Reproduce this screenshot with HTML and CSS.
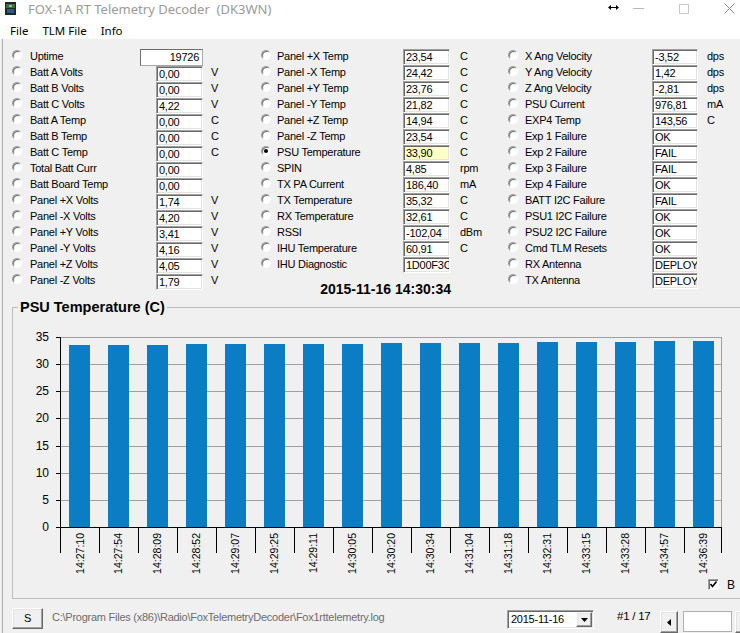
FILE: index.html
```html
<!DOCTYPE html>
<html lang="en">
<head>
  <meta charset="UTF-8">
  <title>FOX-1A RT Telemetry Decoder</title>
  <link rel="stylesheet" href="styles.css">
</head>
<body>
  <div class="titlebar">
    <svg class="app-icon" width="11" height="13" viewBox="0 0 11 13">
      <rect x="0" y="0" width="11" height="13" fill="#1e2a22"/>
      <rect x="1" y="2" width="9" height="4" fill="#3d6b46"/>
      <rect x="2" y="7" width="7" height="4" fill="#2b5a8c"/>
      <rect x="4" y="3" width="3" height="2" fill="#9ac27a"/>
    </svg>
    <span class="title">FOX-1A RT Telemetry Decoder&nbsp; (DK3WN)</span>
    <div class="caption">
      <svg class="cursor" width="11" height="5" viewBox="0 0 11 5">
        <path d="M0 2.5 L3 0 V5 Z M11 2.5 L8 0 V5 Z" fill="#000"/>
        <rect x="2" y="2" width="7" height="1" fill="#000"/>
      </svg>
      <svg class="cap-min" width="11" height="1" viewBox="0 0 11 1"><rect width="11" height="1" fill="#b8b8b8"/></svg>
      <svg class="cap-max" width="10" height="10" viewBox="0 0 10 10"><rect x="0.5" y="0.5" width="9" height="9" fill="none" stroke="#c8c8c8"/></svg>
      <svg class="cap-close" width="11" height="11" viewBox="0 0 11 11"><path d="M0.5 0.5 L10.5 10.5 M10.5 0.5 L0.5 10.5" stroke="#8a8a8a" stroke-width="1"/></svg>
    </div>
  </div>
  <div class="menubar">
    <span>File</span><span>TLM File</span><span>Info</span>
  </div>

  <div class="content">
    <div class="fields">
      <div class="col col-left">
        <div class="row"><span class="radio"></span><span class="label">Uptime</span><span class="uptime">19726</span></div>
        <div class="row"><span class="radio"></span><span class="label">Batt A Volts</span><span class="box">0,00</span><span class="unit">V</span></div>
        <div class="row"><span class="radio"></span><span class="label">Batt B Volts</span><span class="box">0,00</span><span class="unit">V</span></div>
        <div class="row"><span class="radio"></span><span class="label">Batt C Volts</span><span class="box">4,22</span><span class="unit">V</span></div>
        <div class="row"><span class="radio"></span><span class="label">Batt A Temp</span><span class="box">0,00</span><span class="unit">C</span></div>
        <div class="row"><span class="radio"></span><span class="label">Batt B Temp</span><span class="box">0,00</span><span class="unit">C</span></div>
        <div class="row"><span class="radio"></span><span class="label">Batt C Temp</span><span class="box">0,00</span><span class="unit">C</span></div>
        <div class="row"><span class="radio"></span><span class="label">Total Batt Curr</span><span class="box">0,00</span></div>
        <div class="row"><span class="radio"></span><span class="label">Batt Board Temp</span><span class="box">0,00</span></div>
        <div class="row"><span class="radio"></span><span class="label">Panel +X Volts</span><span class="box">1,74</span><span class="unit">V</span></div>
        <div class="row"><span class="radio"></span><span class="label">Panel -X Volts</span><span class="box">4,20</span><span class="unit">V</span></div>
        <div class="row"><span class="radio"></span><span class="label">Panel +Y Volts</span><span class="box">3,41</span><span class="unit">V</span></div>
        <div class="row"><span class="radio"></span><span class="label">Panel -Y Volts</span><span class="box">4,16</span><span class="unit">V</span></div>
        <div class="row"><span class="radio"></span><span class="label">Panel +Z Volts</span><span class="box">4,05</span><span class="unit">V</span></div>
        <div class="row"><span class="radio"></span><span class="label">Panel -Z Volts</span><span class="box">1,79</span><span class="unit">V</span></div>
      </div>

      <div class="col col-mid">
        <div class="row"><span class="radio"></span><span class="label">Panel +X Temp</span><span class="box">23,54</span><span class="unit">C</span></div>
        <div class="row"><span class="radio"></span><span class="label">Panel -X Temp</span><span class="box">24,42</span><span class="unit">C</span></div>
        <div class="row"><span class="radio"></span><span class="label">Panel +Y Temp</span><span class="box">23,76</span><span class="unit">C</span></div>
        <div class="row"><span class="radio"></span><span class="label">Panel -Y Temp</span><span class="box">21,82</span><span class="unit">C</span></div>
        <div class="row"><span class="radio"></span><span class="label">Panel +Z Temp</span><span class="box">14,94</span><span class="unit">C</span></div>
        <div class="row"><span class="radio"></span><span class="label">Panel -Z Temp</span><span class="box">23,54</span><span class="unit">C</span></div>
        <div class="row"><span class="radio on"></span><span class="label">PSU Temperature</span><span class="box selected">33,90</span><span class="unit">C</span></div>
        <div class="row"><span class="radio"></span><span class="label">SPIN</span><span class="box">4,85</span><span class="unit">rpm</span></div>
        <div class="row"><span class="radio"></span><span class="label">TX PA Current</span><span class="box">186,40</span><span class="unit">mA</span></div>
        <div class="row"><span class="radio"></span><span class="label">TX Temperature</span><span class="box">35,32</span><span class="unit">C</span></div>
        <div class="row"><span class="radio"></span><span class="label">RX Temperature</span><span class="box">32,61</span><span class="unit">C</span></div>
        <div class="row"><span class="radio"></span><span class="label">RSSI</span><span class="box">-102,04</span><span class="unit">dBm</span></div>
        <div class="row"><span class="radio"></span><span class="label">IHU Temperature</span><span class="box">60,91</span><span class="unit">C</span></div>
        <div class="row"><span class="radio"></span><span class="label">IHU Diagnostic</span><span class="box">1D00F3C</span></div>
        <div class="timestamp">2015-11-16 14:30:34</div>
      </div>

      <div class="col col-right">
        <div class="row"><span class="radio"></span><span class="label">X Ang Velocity</span><span class="box">-3,52</span><span class="unit">dps</span></div>
        <div class="row"><span class="radio"></span><span class="label">Y Ang Velocity</span><span class="box">1,42</span><span class="unit">dps</span></div>
        <div class="row"><span class="radio"></span><span class="label">Z Ang Velocity</span><span class="box">-2,81</span><span class="unit">dps</span></div>
        <div class="row"><span class="radio"></span><span class="label">PSU Current</span><span class="box">976,81</span><span class="unit">mA</span></div>
        <div class="row"><span class="radio"></span><span class="label">EXP4 Temp</span><span class="box">143,56</span><span class="unit">C</span></div>
        <div class="row"><span class="radio"></span><span class="label">Exp 1 Failure</span><span class="box">OK</span></div>
        <div class="row"><span class="radio"></span><span class="label">Exp 2 Failure</span><span class="box">FAIL</span></div>
        <div class="row"><span class="radio"></span><span class="label">Exp 3 Failure</span><span class="box">FAIL</span></div>
        <div class="row"><span class="radio"></span><span class="label">Exp 4 Failure</span><span class="box">OK</span></div>
        <div class="row"><span class="radio"></span><span class="label">BATT I2C Failure</span><span class="box">FAIL</span></div>
        <div class="row"><span class="radio"></span><span class="label">PSU1 I2C Failure</span><span class="box">OK</span></div>
        <div class="row"><span class="radio"></span><span class="label">PSU2 I2C Failure</span><span class="box">OK</span></div>
        <div class="row"><span class="radio"></span><span class="label">Cmd TLM Resets</span><span class="box">OK</span></div>
        <div class="row"><span class="radio"></span><span class="label">RX Antenna</span><span class="box">DEPLOY</span></div>
        <div class="row"><span class="radio"></span><span class="label">TX Antenna</span><span class="box">DEPLOY</span></div>
      </div>
    </div>

    <fieldset class="group">
      <legend>PSU Temperature (C)</legend>
      <svg class="chart" width="727" height="260" viewBox="13 316 727 260">
        <!-- grid -->
        <g stroke="#a0a0a0" stroke-width="1">
          <line x1="60" y1="337.5" x2="722" y2="337.5"/>
          <line x1="60" y1="364.5" x2="722" y2="364.5"/>
          <line x1="60" y1="391.5" x2="722" y2="391.5"/>
          <line x1="60" y1="418.5" x2="722" y2="418.5"/>
          <line x1="60" y1="446.5" x2="722" y2="446.5"/>
          <line x1="60" y1="473.5" x2="722" y2="473.5"/>
          <line x1="60" y1="500.5" x2="722" y2="500.5"/>
          <line x1="721.5" y1="337" x2="721.5" y2="527"/>
        </g>
        <!-- bars -->
        <g fill="#0a7dc5">
          <rect x="69" y="345" width="21" height="182"/>
          <rect x="108" y="345" width="21" height="182"/>
          <rect x="147" y="345" width="21" height="182"/>
          <rect x="186" y="344" width="21" height="183"/>
          <rect x="225" y="344" width="21" height="183"/>
          <rect x="264" y="344" width="21" height="183"/>
          <rect x="303" y="344" width="21" height="183"/>
          <rect x="342" y="344" width="21" height="183"/>
          <rect x="381" y="343" width="21" height="184"/>
          <rect x="420" y="343" width="21" height="184"/>
          <rect x="459" y="343" width="21" height="184"/>
          <rect x="498" y="343" width="21" height="184"/>
          <rect x="537" y="342" width="21" height="185"/>
          <rect x="576" y="342" width="21" height="185"/>
          <rect x="615" y="342" width="21" height="185"/>
          <rect x="654" y="341" width="21" height="186"/>
          <rect x="693" y="341" width="21" height="186"/>
        </g>
        <!-- axes and ticks -->
        <g stroke="#000" stroke-width="1">
          <line x1="60.5" y1="337" x2="60.5" y2="553"/>
          <line x1="56" y1="527.5" x2="722" y2="527.5"/>
          <line x1="56" y1="337.5" x2="60" y2="337.5"/>
          <line x1="56" y1="364.5" x2="60" y2="364.5"/>
          <line x1="56" y1="391.5" x2="60" y2="391.5"/>
          <line x1="56" y1="418.5" x2="60" y2="418.5"/>
          <line x1="56" y1="446.5" x2="60" y2="446.5"/>
          <line x1="56" y1="473.5" x2="60" y2="473.5"/>
          <line x1="56" y1="500.5" x2="60" y2="500.5"/>
          <line x1="99.5" y1="527" x2="99.5" y2="553"/>
          <line x1="138.5" y1="527" x2="138.5" y2="553"/>
          <line x1="177.5" y1="527" x2="177.5" y2="553"/>
          <line x1="216.5" y1="527" x2="216.5" y2="553"/>
          <line x1="255.5" y1="527" x2="255.5" y2="553"/>
          <line x1="294.5" y1="527" x2="294.5" y2="553"/>
          <line x1="333.5" y1="527" x2="333.5" y2="553"/>
          <line x1="372.5" y1="527" x2="372.5" y2="553"/>
          <line x1="411.5" y1="527" x2="411.5" y2="553"/>
          <line x1="450.5" y1="527" x2="450.5" y2="553"/>
          <line x1="489.5" y1="527" x2="489.5" y2="553"/>
          <line x1="528.5" y1="527" x2="528.5" y2="553"/>
          <line x1="567.5" y1="527" x2="567.5" y2="553"/>
          <line x1="606.5" y1="527" x2="606.5" y2="553"/>
          <line x1="645.5" y1="527" x2="645.5" y2="553"/>
          <line x1="684.5" y1="527" x2="684.5" y2="553"/>
          <line x1="721.5" y1="527" x2="721.5" y2="553"/>
        </g>
        <!-- y labels -->
        <g class="ylabels" text-anchor="end">
          <text x="49" y="341">35</text>
          <text x="49" y="368">30</text>
          <text x="49" y="395">25</text>
          <text x="49" y="422">20</text>
          <text x="49" y="450">15</text>
          <text x="49" y="477">10</text>
          <text x="49" y="504">5</text>
          <text x="49" y="531">0</text>
        </g>
        <!-- x labels -->
        <g class="xlabels" text-anchor="end">
          <text transform="translate(83.5 533) rotate(-90)">14:27:10</text>
          <text transform="translate(122.4 533) rotate(-90)">14:27:54</text>
          <text transform="translate(161.4 533) rotate(-90)">14:28:09</text>
          <text transform="translate(200.3 533) rotate(-90)">14:28:52</text>
          <text transform="translate(239.3 533) rotate(-90)">14:29:07</text>
          <text transform="translate(278.2 533) rotate(-90)">14:29:25</text>
          <text transform="translate(317.1 533) rotate(-90)">14:29:11</text>
          <text transform="translate(356.1 533) rotate(-90)">14:30:05</text>
          <text transform="translate(395 533) rotate(-90)">14:30:20</text>
          <text transform="translate(434 533) rotate(-90)">14:30:34</text>
          <text transform="translate(472.9 533) rotate(-90)">14:31:04</text>
          <text transform="translate(511.9 533) rotate(-90)">14:31:18</text>
          <text transform="translate(550.8 533) rotate(-90)">14:32:31</text>
          <text transform="translate(589.7 533) rotate(-90)">14:33:15</text>
          <text transform="translate(628.7 533) rotate(-90)">14:33:28</text>
          <text transform="translate(667.6 533) rotate(-90)">14:34:57</text>
          <text transform="translate(706.5 533) rotate(-90)">14:36:39</text>
        </g>
      </svg>
      <div class="check-row">
        <span class="checkbox">
          <svg width="9" height="9" viewBox="0 0 9 9"><path d="M1.5 4 L3.5 6.5 L7.5 1.5" fill="none" stroke="#000" stroke-width="1.6"/></svg>
        </span>
        <span class="check-label">B</span>
      </div>
    </fieldset>

    <div class="statusbar">
      <div class="button raised">S</div>
      <div class="path">C:\Program Files (x86)\Radio\FoxTelemetryDecoder\Fox1rttelemetry.log</div>
      <div class="combo">
        <span class="combo-text">2015-11-16</span>
        <span class="combo-btn raised">
          <svg width="7" height="4" viewBox="0 0 7 4"><path d="M0 0 H7 L3.5 4 Z" fill="#000"/></svg>
        </span>
      </div>
      <div class="count">#1 / 17</div>
      <div class="scroll">
        <span class="scroll-btn raised">
          <svg width="4" height="7" viewBox="0 0 4 7"><path d="M4 0 V7 L0 3.5 Z" fill="#000"/></svg>
        </span>
        <span class="scroll-box"></span>
        <span class="scroll-btn raised">
          <svg width="4" height="7" viewBox="0 0 4 7"><path d="M0 0 V7 L4 3.5 Z" fill="#000"/></svg>
        </span>
      </div>
    </div>
  </div>
</body>
</html>
```

FILE: styles.css
```css
body {
  margin: 0;
  width: 740px;
  height: 633px;
  overflow: hidden;
  background: #f0f0f0;
  font-family: "Liberation Sans", Arial, sans-serif;
  font-size: 11px;
  color: #000;
}

/* window chrome */
.titlebar {
  height: 17px;
  background: #fff;
  display: flex;
  align-items: center;
  padding-left: 5px;
}

.app-icon {
  display: block;
}

.title {
  font-family: "Noto Sans", sans-serif;
  font-size: 13px;
  color: #9a9a9a;
  margin-left: 12px;
  white-space: pre;
}

.caption {
  margin-left: auto;
  padding-right: 5px;
  display: flex;
  align-items: center;
}

.caption svg {
  display: block;
}

.cursor {
  align-self: flex-start;
  margin-top: 2px;
}

.cap-min {
  margin-left: 14px;
}

.cap-max {
  margin-left: 35px;
}

.cap-close {
  margin-left: 35px;
}

.menubar {
  height: 22px;
  box-sizing: border-box;
  padding: 5px 0 0 3px;
  background: #fff;
  display: flex;
}

.menubar span {
  font-family: "Noto Sans", sans-serif;
  font-size: 11.5px;
  line-height: 17px;
  padding: 0 7px;
}

.content {
  margin-left: 2px;
  border-left: 1px solid #adadad;
  height: 594px;
}

/* telemetry fields */
.fields {
  display: grid;
  grid-template-columns: 249px 247px 232px;
  padding: 9px 0 0 9px;
}

.col {
  display: flex;
  flex-direction: column;
}

.row {
  display: grid;
  height: 16px;
  grid-template-columns: 18px 126px 47px auto;
  align-items: start;
  letter-spacing: -0.25px;
}

.col-mid .row {
  grid-template-columns: 16px 126px 47px auto;
}

.col-right .row {
  grid-template-columns: 17px 127px 46px auto;
}

.radio {
  width: 10px;
  height: 10px;
  box-sizing: border-box;
  margin-top: 2px;
  border-radius: 50%;
  border: 1px solid;
  border-color: #a0a0a0 #fff #fff #a0a0a0;
  box-shadow: inset 1px 1px 0 #707070;
  background: #fff;
}

.radio.on::after {
  content: "";
  display: block;
  width: 4px;
  height: 4px;
  margin: 2px;
  border-radius: 50%;
  background: #000;
}

.label {
  line-height: 16px;
  white-space: nowrap;
}

.box {
  height: 16px;
  box-sizing: border-box;
  margin-top: 1px;
  padding-left: 2px;
  border: 1px solid;
  border-color: #a0a0a0 #fff #fff #a0a0a0;
  box-shadow: inset 1px 1px 0 #696969, inset -1px -1px 0 #e3e3e3;
  background: #fff;
  line-height: 15px;
  white-space: nowrap;
  overflow: hidden;
}

.col-left .box {
  margin-top: 2px;
}

.box.selected {
  background: #ffffc4;
}

.uptime {
  grid-column: 3 / 5;
  width: 63px;
  height: 17px;
  box-sizing: border-box;
  margin: 1px 0 0 -16px;
  padding-right: 3px;
  border: 1px solid #a8a8a8;
  border-top-color: #6e6e6e;
  border-left-color: #6e6e6e;
  background: #fff;
  text-align: right;
  line-height: 15px;
}

.unit {
  line-height: 16px;
  padding-left: 8px;
}

.col-mid .unit {
  padding-left: 10px;
}

.col-right .unit {
  padding-left: 9px;
}

.timestamp {
  width: 190px;
  margin-top: 9px;
  text-align: right;
  font-weight: bold;
  font-size: 14px;
  line-height: 16px;
}

/* chart group */
.group {
  margin: 1px 0 0 9px;
  padding: 0 0 8px 0;
  width: 735px;
  min-width: 0;
  box-sizing: border-box;
  border: 1px solid #bdbdbd;
}

.group legend {
  margin-left: 5px;
  padding: 0 2px;
  font-weight: bold;
  font-size: 14.5px;
  line-height: 18px;
}

.chart {
  display: block;
}

.ylabels {
  font-family: "Liberation Sans", Arial, sans-serif;
  font-size: 12px;
}

.xlabels {
  font-family: "Liberation Sans", Arial, sans-serif;
  font-size: 10.5px;
}

.check-row {
  display: flex;
  align-items: center;
  height: 11px;
  margin-top: 3px;
  padding-left: 695px;
}

.checkbox {
  width: 11px;
  height: 11px;
  box-sizing: border-box;
  border: 1px solid;
  border-color: #a0a0a0 #fff #fff #a0a0a0;
  box-shadow: inset 1px 1px 0 #696969;
  background: #fff;
  display: flex;
  align-items: center;
  justify-content: center;
}

.checkbox svg {
  display: block;
}

.check-label {
  margin-left: 8px;
  font-size: 12px;
}

/* bottom bar */
.statusbar {
  display: flex;
  align-items: flex-start;
  padding: 9px 0 0 9px;
  letter-spacing: -0.25px;
}

.statusbar > * {
  flex-shrink: 0;
}

.raised {
  box-sizing: border-box;
  background: #f0f0f0;
  border: 1px solid;
  border-color: #fff #696969 #696969 #fff;
  box-shadow: inset -1px -1px 0 #a0a0a0, inset 1px 1px 0 #e3e3e3;
}

.button {
  width: 31px;
  height: 21px;
  line-height: 19px;
  text-align: center;
}

.path {
  width: 455px;
  margin-left: 9px;
  line-height: 19px;
  color: #6d6d6d;
  white-space: nowrap;
  overflow: hidden;
}

.combo {
  width: 87px;
  height: 19px;
  margin-top: 2px;
  box-sizing: border-box;
  border: 1px solid;
  border-color: #a0a0a0 #fff #fff #a0a0a0;
  box-shadow: inset 1px 1px 0 #696969, inset -1px -1px 0 #e3e3e3;
  background: #fff;
  display: flex;
  padding: 1px;
}

.combo-text {
  padding-left: 2px;
  line-height: 15px;
}

.combo-btn {
  margin-left: auto;
  width: 16px;
  height: 15px;
  display: flex;
  align-items: center;
  justify-content: center;
}

.combo-btn svg,
.scroll-btn svg {
  display: block;
}

.count {
  width: 35px;
  margin-left: 23px;
  font-size: 11.5px;
  line-height: 16px;
  white-space: nowrap;
}

.scroll {
  display: flex;
  margin: 3px 0 0 8px;
}

.scroll-btn {
  width: 18px;
  height: 22px;
  display: flex;
  align-items: center;
  justify-content: center;
}

.scroll-box {
  width: 49px;
  height: 21px;
  margin: 0 3px 0 5px;
  box-sizing: border-box;
  border: 1px solid #b0b0b0;
  background: #fff;
}
```
